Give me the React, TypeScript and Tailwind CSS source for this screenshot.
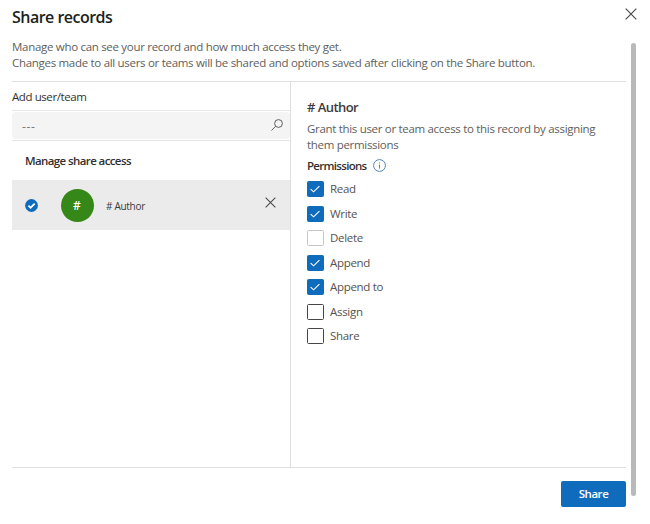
import React from "react";

type Permission = { label: string; state: "checked" | "disabled" | "empty" };

const permissions: Permission[] = [
  { label: "Read", state: "checked" },
  { label: "Write", state: "checked" },
  { label: "Delete", state: "disabled" },
  { label: "Append", state: "checked" },
  { label: "Append to", state: "checked" },
  { label: "Assign", state: "empty" },
  { label: "Share", state: "empty" },
];

const boxStyles = {
  checked: "border-[#0f6cbd] bg-[#0f6cbd]",
  disabled: "border-[#c8c6c4] bg-white",
  empty: "border-[#484644] bg-white",
};

function Cross({ className }: { className: string }) {
  return (
    <svg viewBox="0 0 12 12" className={className} fill="none" stroke="currentColor" strokeWidth="1.1">
      <path d="M0.7 0.7 11.3 11.3M11.3 0.7 0.7 11.3" />
    </svg>
  );
}

function PermissionRow({ label, state }: Permission) {
  return (
    <label className="flex h-[24.5px] items-start">
      <span className={`flex h-[16.4px] w-[16.5px] items-center justify-center rounded-[1.5px] border ${boxStyles[state]}`}>
        {state === "checked" && (
          <svg viewBox="0 0 12 12" className="h-3 w-3 shrink-0" fill="none" stroke="white" strokeWidth="1.1">
            <path d="M1.6 6.1 4.6 8.8 10.4 3.2" />
          </svg>
        )}
      </span>
      <span className="ml-[6.5px] text-[11.5px] leading-4 tracking-[-0.3px] text-[#55524f]">{label}</span>
    </label>
  );
}

export default function App() {
  return (
    <div className="flex h-[524px] w-[650px] flex-col bg-white font-['Open_Sans','Noto_Sans',sans-serif] text-[#605e5c]">
      <header className="flex h-[38px] items-start justify-between pl-3 pr-[13px]">
        <h1 className="pt-[6px] text-[16px] font-semibold leading-[22px] tracking-[-0.52px] text-[#201f1e]">Share records</h1>
        <Cross className="mt-2 h-3 w-3 text-[#484644]" />
      </header>
      <div className="flex min-h-0 flex-1">
        <main className="flex w-[626px] flex-col pl-3">
          <p className="h-[43px] whitespace-nowrap pt-[1px] text-[11.5px] leading-4 tracking-[-0.3px]">
            Manage who can see your record and how much access they get.
            <br />
            Changes made to all users or teams will be shared and options saved after clicking on the Share button.
          </p>
          <div className="flex h-[387px] border-y border-[#e1dfdd]">
            <section className="w-[279px] border-r border-[#e1dfdd]">
              <h2 className="h-7 text-[11.5px] leading-[30px] tracking-[-0.42px] text-[#323130]">Add user/team</h2>
              <div className="h-[31px] border-y border-[#e6e6e6] py-px">
                <div className="flex h-[27px] items-center justify-between rounded-sm bg-[#f4f4f4] pl-[10px] pr-[7px]">
                  <span className="pt-[2px] text-[12px] tracking-[0.7px] text-[#797775]">---</span>
                  <svg viewBox="0 0 12 12" className="mb-[2px] h-3 w-3" fill="none" stroke="#605e5c" strokeWidth="1">
                    <circle cx="7.5" cy="4.5" r="3.9" />
                    <path d="M4.6 7.3 0.5 11.5" />
                  </svg>
                </div>
              </div>
              <h3 className="h-[39px] pl-[13px] text-[11.5px] font-semibold leading-[40px] tracking-[-0.6px] text-[#323130]">Manage share access</h3>
              <div className="flex h-[50px] items-center bg-[#ebebeb] pl-[13px] pr-[14px]">
                <svg viewBox="0 0 13 13" className="h-[13px] w-[13px]">
                  <circle cx="6.5" cy="6.5" r="6.4" fill="#0f6cbd" />
                  <path d="M3.4 6.6 5.6 8.7 9.7 4.6" fill="none" stroke="white" strokeWidth="1.7" />
                </svg>
                <span className="ml-[22.5px] flex h-[33px] w-[33px] items-center justify-center rounded-full bg-[#358717] pt-px text-[12px] font-semibold text-white">#</span>
                <span className="ml-[12.5px] flex-1 pt-[2px] text-[10px] tracking-[-0.3px] text-[#3b3a39]"># Author</span>
                <Cross className="mb-[6px] h-[11px] w-[11px] text-[#484644]" />
              </div>
            </section>
            <section className="flex-1 pl-4 pt-[16px]">
              <h2 className="text-[13px] font-semibold leading-[18px] tracking-[-0.55px] text-[#3b3a39]"># Author</h2>
              <p className="mt-[5px] whitespace-nowrap text-[11.5px] leading-4 tracking-[-0.31px]">
                Grant this user or team access to this record by assigning
                <br />
                them permissions
              </p>
              <div className="mt-[5px] flex h-4 items-center gap-[6.5px]">
                <h3 className="text-[11.5px] font-semibold leading-4 tracking-[-0.7px] text-[#323130]">Permissions</h3>
                <svg viewBox="0 0 13 13" className="mb-px h-[13px] w-[13px]" fill="none" stroke="#4377ae" strokeWidth="0.9">
                  <circle cx="6.5" cy="6.5" r="5.9" />
                  <path d="M6.5 5.6V9.6M6.5 3.5V4.5" />
                </svg>
              </div>
              <div className="mt-[7px]">
                {permissions.map((p) => (
                  <PermissionRow key={p.label} {...p} />
                ))}
              </div>
            </section>
          </div>
          <footer className="flex justify-end pt-[13px]">
            <button className="h-[26px] w-[65px] rounded-[2px] bg-[#0f6cbd] text-[11.5px] font-semibold tracking-[-0.45px] text-white">Share</button>
          </footer>
        </main>
        <div className="ml-[5px] mt-[5px] h-[453px] w-[5px] rounded-full bg-[#b9b9b9]" />
      </div>
    </div>
  );
}
